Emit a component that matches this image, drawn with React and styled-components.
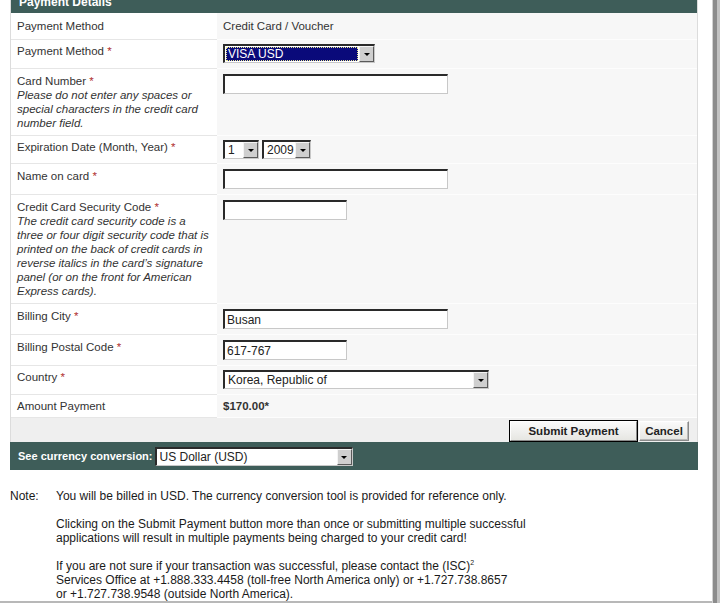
import React from 'react'
import styled, { createGlobalStyle } from 'styled-components'

const GlobalStyle = createGlobalStyle`
    html, body {
        margin: 0;
        padding: 0;
        background: #fff;
        overflow: hidden;
    }
    body {
        font-family: "Liberation Sans", Arial, sans-serif;
        font-size: 11.5px;
        color: #333;
    }
`

const TEAL = '#3e5d59'

const Window = styled.div`
    display: flex;
    height: 603px;
    overflow: hidden;
`

const Main = styled.div`
    width: 712px;
    height: 603px;
    box-sizing: border-box;
    border-bottom: 2px solid #b8b8b8;
    overflow: hidden;
`

const Frame = styled.div`
    width: 8px;
    background: linear-gradient(to right, #d2d2d2 0 1px, #8c8c8c 1px 5px, #c2c2c2 5px 8px);
`

const Panel = styled.div`
    margin: -9px 0 0 10px;
    width: 688px;
    box-sizing: border-box;
    border-left: 1px solid #dcdcdc;
    border-right: 1px solid #dcdcdc;
`

const Header = styled.div`
    height: 22px;
    line-height: 22px;
    padding-left: 8px;
    background: ${TEAL};
    color: #fff;
    font-weight: bold;
    font-size: 12px;
`

const Row = styled.div`
    display: grid;
    grid-template-columns: 206px 1fr;
`

const Label = styled.div`
    background: #fff;
    padding: ${p => p.$pt}px 6px ${p => p.$pb}px;
    border-bottom: 1px solid #e6e6e6;
    line-height: 14px;
    color: #333;
`

const Value = styled.div`
    background: #f7f7f7;
    padding: ${p => p.$pt}px 6px ${p => p.$pb}px;
    border-bottom: 1px solid #fdfdfd;
    line-height: 14px;
    color: #333;
    font-weight: ${p => (p.$bold ? 'bold' : 'normal')};
    display: flex;
    align-items: flex-start;
    gap: 3px;
`

const Req = styled.span`
    color: #b03030;
`

const Help = styled.div`
    font-style: italic;
`

const Input = styled.input`
    width: ${p => p.$w}px;
    height: 20px;
    box-sizing: border-box;
    margin: 0;
    padding: 1px 2px 0;
    border-top: 2px solid #2a2a2a;
    border-left: 2px solid #2a2a2a;
    border-right: 1px solid #c8c8c8;
    border-bottom: 1px solid #c8c8c8;
    background: #fff;
    font-family: "Liberation Sans", Arial, sans-serif;
    font-size: 12px;
    color: #222;
    outline: none;
`

const SelectBox = styled.div`
    display: flex;
    width: ${p => p.$w}px;
    height: 19px;
    box-sizing: border-box;
    border-top: 2px solid #2a2a2a;
    border-left: 2px solid #2a2a2a;
    border-right: 1px solid #c8c8c8;
    border-bottom: 1px solid #c8c8c8;
    background: #fff;
    font-size: 12px;
    font-weight: normal;
    color: #222;
`

const SelectText = styled.div`
    flex: 1;
    margin: 1px;
    padding: 0 2px;
    line-height: 14px;
    white-space: nowrap;
    overflow: hidden;
    background: ${p => (p.$active ? '#0a0a7a' : 'transparent')};
    color: ${p => (p.$active ? '#fff' : '#222')};
    outline: ${p => (p.$active ? '1px dotted #e8e890' : 'none')};
    outline-offset: -1px;
`

const Arrow = styled.div`
    width: 15px;
    flex: none;
    box-sizing: border-box;
    background: #cfcfcf;
    border: 1px solid;
    border-color: #f4f4f4 #5a5a5a #5a5a5a #f4f4f4;
    display: flex;
    align-items: center;
    justify-content: center;

    &::after {
        content: '';
        border-left: 3px solid transparent;
        border-right: 3px solid transparent;
        border-top: 3px solid #000;
        margin-top: 1px;
    }
`

const Select = ({ w, children, active }) => (
    <SelectBox $w={w}>
        <SelectText $active={active}>{children}</SelectText>
        <Arrow />
    </SelectBox>
)

const ButtonBar = styled.div`
    display: flex;
    justify-content: flex-end;
    padding: 3px 8px 1px;
    height: 24px;
    box-sizing: border-box;
    background: #efefef;
`

const Button = styled.button`
    width: ${p => p.$w}px;
    height: 20px;
    margin: 0;
    padding: 0;
    box-sizing: border-box;
    font-family: "Liberation Sans", Arial, sans-serif;
    font-size: 11.5px;
    font-weight: bold;
    color: #222;
    background: linear-gradient(#fafafa, #e6e6e2);
    border: 1px solid;
    border-color: #fff #8a8a8a #8a8a8a #fff;
    box-shadow: ${p => (p.$primary ? '0 0 0 1px #000' : 'inset -1px -1px 0 #b8b8b8')};
    margin-left: ${p => (p.$primary ? 0 : 2)}px;
`

const CurrencyBar = styled.div`
    display: flex;
    align-items: center;
    gap: 2px;
    height: 28px;
    margin-left: -1px;
    width: 688px;
    padding: 0 8px;
    box-sizing: border-box;
    background: ${TEAL};
    color: #fff;
    font-weight: bold;
    font-size: 11px;
`

const Notes = styled.div`
    margin: 19px 0 0 10px;
    display: grid;
    grid-template-columns: 46px 1fr;
    line-height: 14px;
    font-size: 12px;
    color: #1a1a1a;
`

const Para = styled.p`
    margin: 0 0 14px;
`

const Sup = styled.sup`
    font-size: 7px;
    line-height: 0;
    vertical-align: 5px;
`

const rows = [
    { label: 'Payment Method', value: 'Credit Card / Voucher', pad: [6, 6] },
    { label: 'Payment Method', req: true, field: <Select w={152} active>VISA USD</Select>, pad: [4, 5] },
    {
        label: 'Card Number',
        req: true,
        help: ['Please do not enter any spaces or', 'special characters in the credit card', 'number field.'],
        field: <Input $w={225} />,
    },
    {
        label: 'Expiration Date (Month, Year)',
        req: true,
        field: (
            <>
                <Select w={36}>1</Select>
                <Select w={49}>2009</Select>
            </>
        ),
        pad: [4, 4],
    },
    { label: 'Name on card', req: true, field: <Input $w={225} /> },
    {
        label: 'Credit Card Security Code',
        req: true,
        help: [
            'The credit card security code is a',
            'three or four digit security code that is',
            'printed on the back of credit cards in',
            'reverse italics in the card\u2019s signature',
            'panel (or on the front for American',
            'Express cards).',
        ],
        field: <Input $w={124} />,
    },
    { label: 'Billing City', req: true, field: <Input $w={225} defaultValue="Busan" /> },
    { label: 'Billing Postal Code', req: true, field: <Input $w={124} defaultValue="617-767" /> },
    { label: 'Country', req: true, field: <Select w={266}>Korea, Republic of</Select>, pad: [4, 5] },
    { label: 'Amount Payment', value: '$170.00*', bold: true, pad: [4, 4] },
]

const App = () => (
    <Window>
        <GlobalStyle />
        <Main>
            <Panel>
                <Header>Payment Details</Header>
                {rows.map((r, i) => {
                    const [pt, pb] = r.pad || [5, 5]
                    return (
                        <Row key={i}>
                            <Label $pt={pt} $pb={pb}>
                                {r.label}
                                {r.req && <Req> *</Req>}
                                {r.help && (
                                    <Help>
                                        {r.help.map((line, j) => (
                                            <div key={j}>{line}</div>
                                        ))}
                                    </Help>
                                )}
                            </Label>
                            <Value $pt={pt} $pb={pb} $bold={r.bold}>
                                {r.field || r.value}
                            </Value>
                        </Row>
                    )
                })}
                <ButtonBar>
                    <Button $w={127} $primary>Submit Payment</Button>
                    <Button $w={50}>Cancel</Button>
                </ButtonBar>
                <CurrencyBar>
                    See currency conversion:
                    <Select w={198}>US Dollar (USD)</Select>
                </CurrencyBar>
            </Panel>
            <Notes>
                <div>Note:</div>
                <div>
                    <Para>You will be billed in USD. The currency conversion tool is provided for reference only.</Para>
                    <Para>
                        Clicking on the Submit Payment button more than once or submitting multiple successful
                        <br />
                        applications will result in multiple payments being charged to your credit card!
                    </Para>
                    <Para>
                        If you are not sure if your transaction was successful, please contact the (ISC)<Sup>2</Sup>
                        <br />
                        Services Office at +1.888.333.4458 (toll-free North America only) or +1.727.738.8657
                        <br />
                        or +1.727.738.9548 (outside North America).
                    </Para>
                </div>
            </Notes>
        </Main>
        <Frame />
    </Window>
)

export default App
